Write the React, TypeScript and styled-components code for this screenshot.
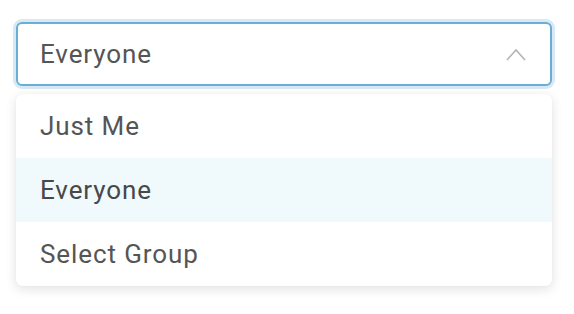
import React from "react";
import styled, { createGlobalStyle } from "styled-components";

const Global = createGlobalStyle`
  html, body { margin: 0; padding: 0; background: #ffffff; }
  body { font-family: Roboto, "Liberation Sans", Arial, sans-serif; }
`;

const Wrapper = styled.div`
  width: 552px;
  min-height: 314px;
  box-sizing: border-box;
  padding: 22px 0 24px 16px;
  display: flex;
  flex-direction: column;
  gap: 8px;
`;

const Control = styled.div`
  box-sizing: border-box;
  height: 64px;
  border: 2px solid #6aaed7;
  border-radius: 6px;
  box-shadow: 0 0 0 3px #d9e9f4;
  display: flex;
  align-items: center;
  justify-content: space-between;
  padding: 0 24px 0 22px;
  font-size: 26px;
  letter-spacing: 0.9px;
  color: #555555;
  background: #ffffff;
`;

const Menu = styled.ul`
  list-style: none;
  margin: 0;
  padding: 0;
  background: #ffffff;
  border-radius: 6px;
  overflow: hidden;
  box-shadow: 0 3px 12px rgba(0, 0, 0, 0.12), 0 0 1px rgba(0, 0, 0, 0.1);
`;

const Option = styled.li<{ $active?: boolean }>`
  height: 64px;
  display: flex;
  align-items: center;
  padding-left: 24px;
  font-size: 26px;
  letter-spacing: 0.9px;
  color: ${(p) => (p.$active ? "#484848" : "#555555")};
  background: ${(p) => (p.$active ? "#f0f9fc" : "transparent")};
`;

const Chevron = () => (
  <svg width="20" height="13" viewBox="0 0 20 13" fill="none">
    <path d="M1 12 L10 2 L19 12" stroke="#b3b3b3" strokeWidth="1.6" />
  </svg>
);

export default function App() {
  return (
    <>
      <Global />
      <Wrapper>
        <Control>
          <span>Everyone</span>
          <Chevron />
        </Control>
        <Menu>
          <Option>Just Me</Option>
          <Option $active>Everyone</Option>
          <Option>Select Group</Option>
        </Menu>
      </Wrapper>
    </>
  );
}
